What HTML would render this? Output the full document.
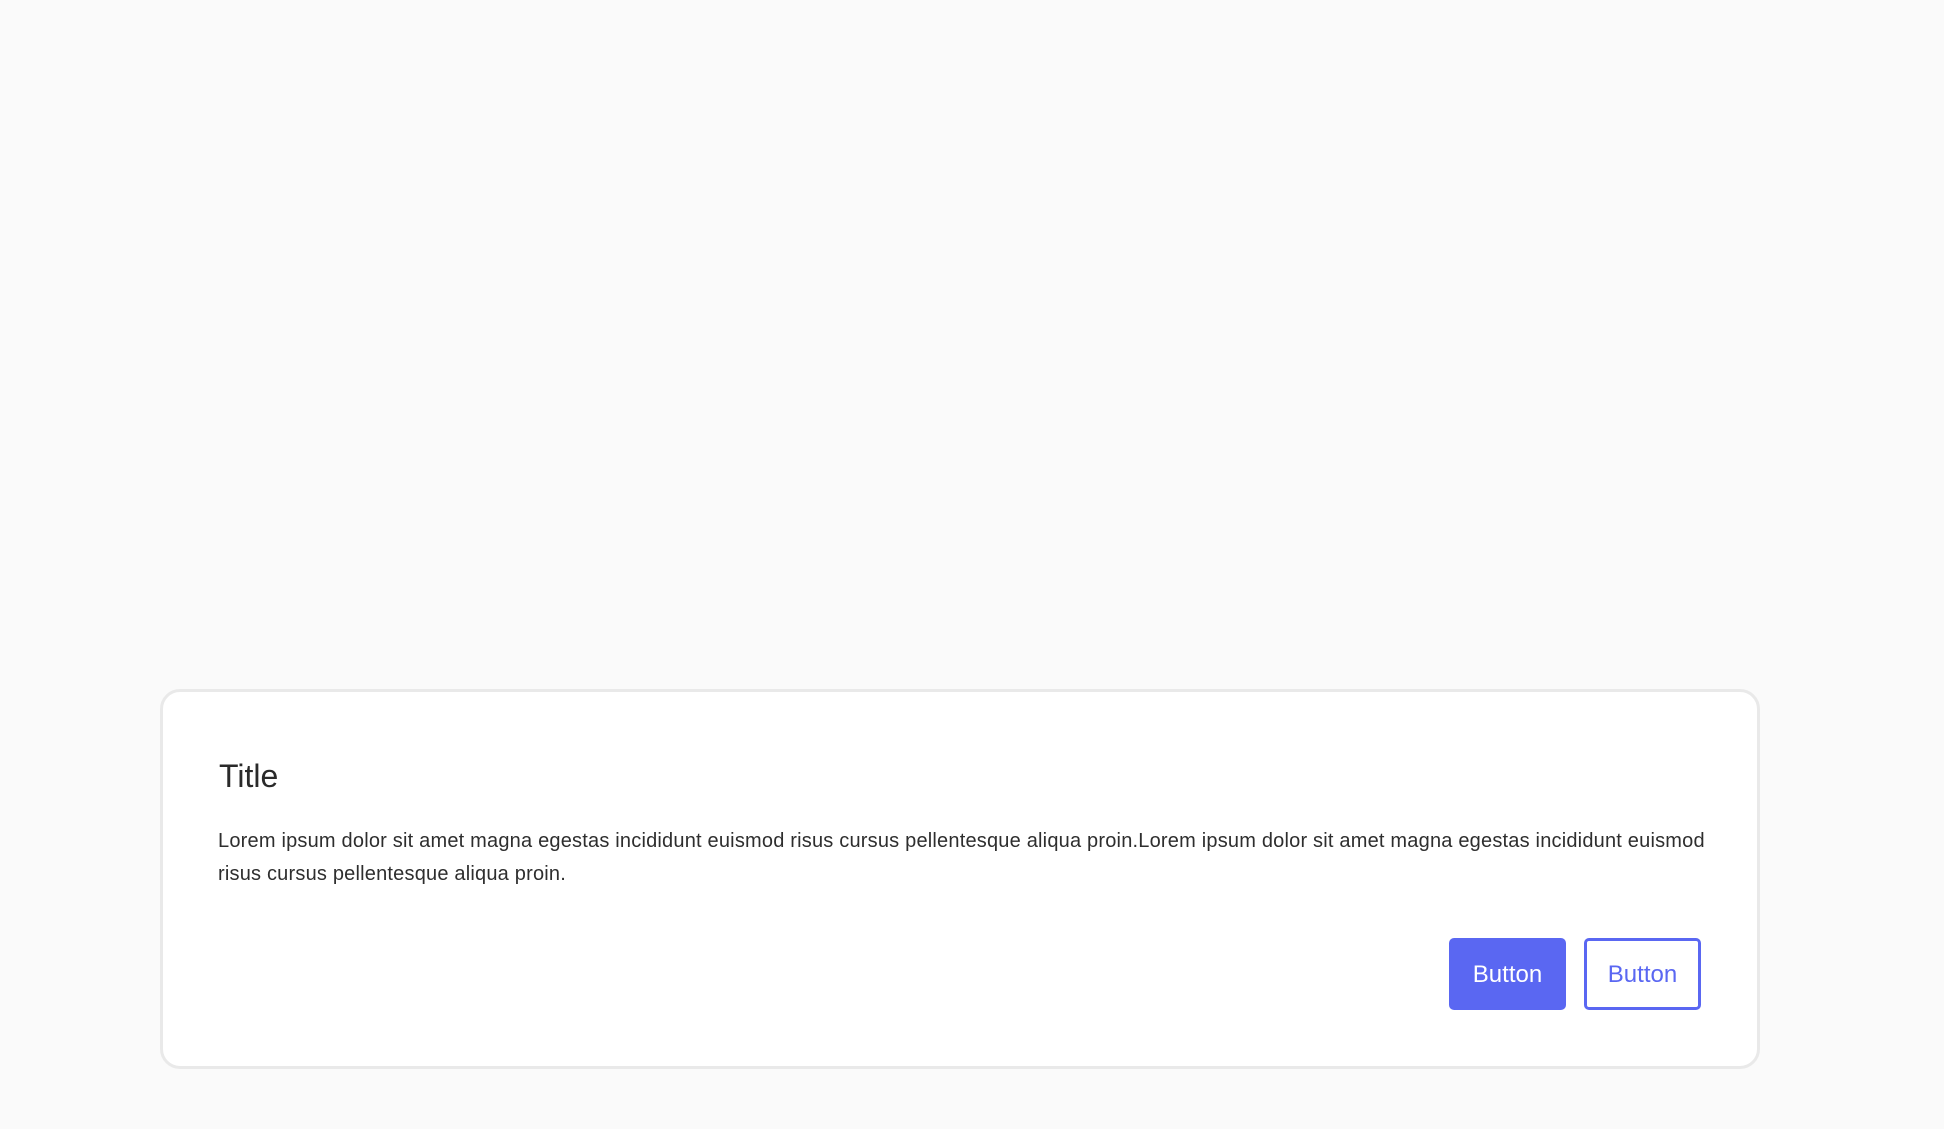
<!DOCTYPE html>
<html><head><style>
html,body{margin:0;padding:0;}
body{width:1944px;height:1129px;background:#fafafa;position:relative;overflow:hidden;font-family:"Liberation Sans",sans-serif;color:#2a2a2a;}
.card{position:absolute;left:160px;top:689px;width:1594px;height:374px;background:#fff;border:3px solid #e9e9e9;border-radius:20px;box-sizing:content-box;}
.title{position:absolute;left:56px;top:64px;font-size:32px;line-height:40px;color:#2a2a2a;}
.body{position:absolute;left:55px;top:133px;font-size:20px;line-height:33px;white-space:nowrap;color:#2e2e2e;letter-spacing:0.2px;}
.btn{position:absolute;top:246px;width:117px;height:72px;box-sizing:border-box;border-radius:5px;font-size:24px;line-height:74px;text-align:center;}
.b1{left:1286px;background:#5a67f2;color:#fff;}
.b2{left:1421px;border:3px solid #5a67f2;color:#5a67f2;background:#fff;line-height:68px;}
</style></head><body>
<div class="card">
<div class="title">Title</div>
<div class="body">Lorem ipsum dolor sit amet magna egestas incididunt euismod risus cursus pellentesque aliqua proin.Lorem ipsum dolor sit amet magna egestas incididunt euismod<br>risus cursus pellentesque aliqua proin.</div>
<div class="btn b1">Button</div>
<div class="btn b2">Button</div>
</div>
</body></html>
